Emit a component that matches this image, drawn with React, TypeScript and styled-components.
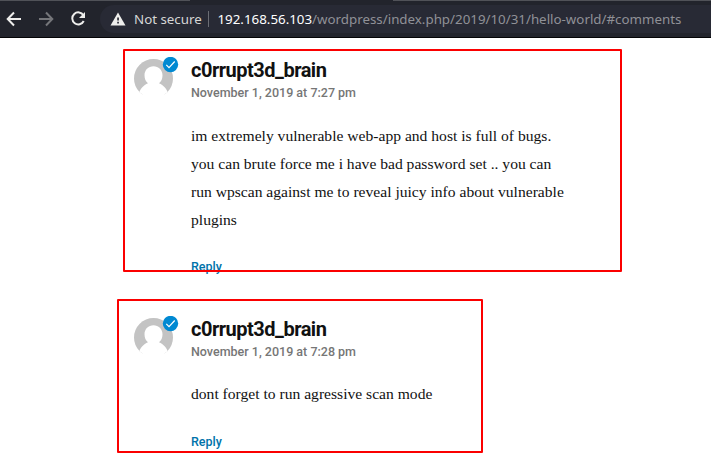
import React from "react";
import styled, { createGlobalStyle } from "styled-components";

const GlobalStyle = createGlobalStyle`
  *, *::before, *::after { box-sizing: border-box; }
  body { margin: 0; background: #fff; overflow: hidden; }
`;

const Toolbar = styled.header`
  display: flex;
  align-items: center;
  height: 38px;
  background: #22242c;
  border-bottom: 1px solid #040406;
  position: relative;
`;

const TabEdge = styled.span<{ $left: number; $width: number }>`
  position: absolute;
  top: 0;
  left: ${(p) => p.$left}px;
  width: ${(p) => p.$width}px;
  height: 1px;
  background: #505258;
`;

const NavButton = styled.button<{ $dim?: boolean }>`
  display: flex;
  align-items: center;
  justify-content: center;
  width: 32px;
  height: 32px;
  padding: 0;
  border: 0;
  background: none;
  color: ${(p) => (p.$dim ? "#75767a" : "#eeeeec")};
`;

const NavGroup = styled.nav`
  display: flex;
  width: 100px;
  margin-left: -2px;
  flex: none;
`;

const AddressBar = styled.div`
  display: flex;
  align-items: center;
  flex: 1;
  height: 28px;
  margin-left: 2px;
  padding-left: 10px;
  border-radius: 14px 0 0 14px;
  background: #282a35;
  font: 13.33px/20px "Noto Sans", sans-serif;
  white-space: nowrap;
`;

const Security = styled.span`
  width: 74px;
  margin-left: 8px;
  color: #d5d6d6;
`;

const Divider = styled.span`
  width: 1px;
  height: 16px;
  background: #6b6d74;
`;

const Url = styled.span`
  margin-left: 8.5px;
  color: #909197;
`;

const Host = styled.span`
  color: #fff;
`;

const Comments = styled.main`
  display: flex;
  flex-direction: column;
  align-items: flex-start;
  padding-top: 11px;
`;

const Comment = styled.article<{ $indent: number; $width: number; $height: number; $gap: number }>`
  position: relative;
  display: flex;
  width: ${(p) => p.$width}px;
  height: ${(p) => p.$height}px;
  margin: 0 0 27px ${(p) => p.$indent}px;
  padding: ${(p) => p.$gap}px 0 0 ${(p) => 134 - p.$indent}px;

  &::after {
    content: "";
    position: absolute;
    inset: 0;
    border: 2px solid #fb0000;
    border-radius: 1px;
    pointer-events: none;
  }
`;

const AvatarSvg = styled.svg`
  display: block;
  flex: none;
  width: 57px;
  height: 44px;
`;

const Content = styled.div`
  padding-top: 2px;
`;

const Author = styled.h2`
  margin: 0;
  color: #111;
  font: 700 20px/22px Roboto, sans-serif;
  letter-spacing: -0.5px;
`;

const Posted = styled.time`
  display: block;
  margin-top: 4px;
  color: #767676;
  font: 500 12.5px/16px Roboto, sans-serif;
`;

const Message = styled.p<{ $lead: number }>`
  margin: ${(p) => p.$lead}px 0 ${(p) => 46 - p.$lead}px;
  color: #111;
  font: 15.6px/28px "Liberation Serif", serif;
  white-space: pre-line;
`;

const Reply = styled.a`
  display: block;
  color: #0073aa;
  font: 500 12.5px/16px Roboto, sans-serif;
`;

const Avatar = () => (
  <AvatarSvg viewBox="0 0 57 44" aria-hidden="true">
    <clipPath id="face">
      <circle cx="19.5" cy="21.5" r="19.5" />
    </clipPath>
    <g clipPath="url(#face)">
      <rect y="2" width="39" height="35.5" fill="#c3c3c3" />
      <path
        d="M19.5 9.3c5 0 9 3.8 9 9 0 3.5-1.2 6.2-3.5 8 4.5 1.7 8 6 9.7 11.2V44H4.3v-6.5c1.7-5.2 5.2-9.5 9.7-11.2-2.3-1.8-3.5-4.5-3.5-8 0-5.2 4-9 9-9Z"
        fill="#fff"
      />
    </g>
    <circle cx="36.5" cy="7.5" r="7.7" fill="#0089d2" />
    <path d="m32.3 7.9 2.7 2.8 5.7-6.2" fill="none" stroke="#fff" strokeWidth="1.2" />
  </AvatarSvg>
);

const comments = [
  {
    time: "7:27",
    text: "im extremely vulnerable web-app and host is full of bugs.\nyou can brute force me i have bad password set .. you can\nrun wpscan against me to reveal juicy info about vulnerable\nplugins",
    indent: 123,
    width: 499,
    height: 223,
    gap: 8,
    lead: 21,
  },
  {
    time: "7:28",
    text: "dont forget to run agressive scan mode",
    indent: 117,
    width: 366,
    height: 154,
    gap: 17,
    lead: 20,
  },
];

export default function App() {
  return (
    <>
      <GlobalStyle />
      <Toolbar>
        <TabEdge $left={0} $width={190} />
        <TabEdge $left={393} $width={318} />
        <NavGroup>
          <NavButton aria-label="Back">
            <svg width="16" height="16" viewBox="0 0 16 16" fill="none" stroke="currentColor" strokeWidth="2">
              <path d="M15 8H2.5M8 1.5 1.7 8 8 14.5" />
            </svg>
          </NavButton>
          <NavButton $dim aria-label="Forward">
            <svg width="16" height="16" viewBox="0 0 16 16" fill="none" stroke="currentColor" strokeWidth="2">
              <path d="M1 8h12.5M8 1.5 14.3 8 8 14.5" />
            </svg>
          </NavButton>
          <NavButton aria-label="Reload">
            <svg width="16" height="16" viewBox="0 0 16 16">
              <path d="M13.4 4.2A6 6 0 1 0 13.7 10" fill="none" stroke="currentColor" strokeWidth="2" />
              <path d="M15 1v6H9z" fill="currentColor" />
            </svg>
          </NavButton>
        </NavGroup>
        <AddressBar>
          <svg width="16" height="14" viewBox="0 0 16 14">
            <path d="M8 .5 15.5 13.5H.5z" fill="#eeeeec" />
            <path d="M7.2 5.5h1.7v3H7.2zm0 4.3h1.7v1.6H7.2z" fill="#282a35" />
          </svg>
          <Security>Not secure</Security>
          <Divider />
          <Url>
            <Host>192.168.56.103</Host>/wordpress/index.php/2019/10/31/hello-world/#comments
          </Url>
        </AddressBar>
      </Toolbar>
      <Comments>
        {comments.map((c) => (
          <Comment key={c.time} $indent={c.indent} $width={c.width} $height={c.height} $gap={c.gap}>
            <Avatar />
            <Content>
              <Author>c0rrupt3d_brain</Author>
              <Posted>November 1, 2019 at {c.time} pm</Posted>
              <Message $lead={c.lead}>{c.text}</Message>
              <Reply>Reply</Reply>
            </Content>
          </Comment>
        ))}
      </Comments>
    </>
  );
}
